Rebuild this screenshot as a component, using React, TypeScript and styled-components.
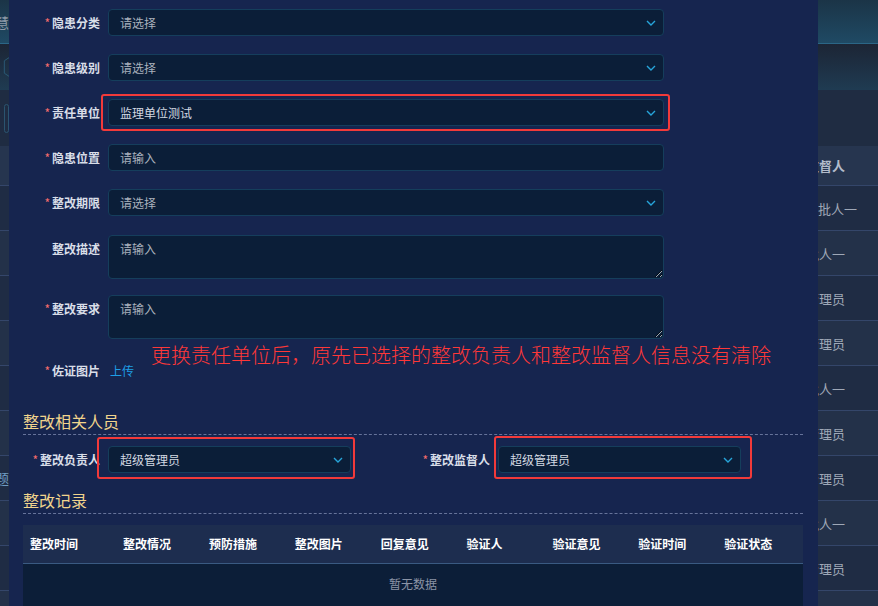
import React from "react"
import styled, { createGlobalStyle } from "styled-components"

const GlobalStyle = createGlobalStyle`
  html, body {
    margin: 0;
    padding: 0;
    background: #16254f;
  }
  body {
    font-family: "Noto Sans CJK SC", "Noto Sans", sans-serif;
  }
  * {
    box-sizing: border-box;
  }
`

const Page = styled.div`
  display: grid;
  grid-template-columns: 9px 809px 1fr;
  height: 606px;
  overflow: hidden;
`

/* ---------- page behind the dialog ---------- */

const Strip = styled.div`
  display: flex;
  flex-direction: column;
  overflow: hidden;
  background: #1f2c44;
`

const TopBar = styled.div`
  height: 44px;
  flex: none;
  display: flex;
  align-items: center;
  background: linear-gradient(#1b3447, #1f4a64);
  border-bottom: 1px solid #2b6686;
  color: #8d9aa8;
  font-size: 16px;
`

const SubBar = styled.div`
  height: 46px;
  flex: none;
  display: flex;
  align-items: center;
  background: linear-gradient(#1c2535, #1f3b52);
`

const FilterBar = styled.div`
  height: 56px;
  flex: none;
  display: flex;
  align-items: center;
  background: #1f2c42;
`

const BgRow = styled.div<{ $head?: boolean; $alt?: boolean; $pr?: number }>`
  height: ${(p) => (p.$head ? 40 : 45)}px;
  flex: none;
  display: flex;
  align-items: center;
  justify-content: flex-end;
  padding-right: ${(p) => p.$pr ?? 33}px;
  white-space: nowrap;
  font-size: 13px;
  font-weight: ${(p) => (p.$head ? 700 : 400)};
  color: ${(p) => (p.$head ? "#b3bccb" : "#9fa8b7")};
  background: ${(p) => (p.$head ? "#26354f" : p.$alt ? "#233149" : "#1f2c44")};
  border-bottom: 1px solid #34466a;
`

const LeftText = styled.span<{ $color?: string }>`
  margin-left: -5px;
  color: ${(p) => p.$color ?? "#8d9aa8"};
  font-size: 14px;
`

const Hexagon = styled.svg`
  margin-left: 2px;
`

const GhostBox = styled.div`
  width: 20px;
  height: 29px;
  margin-left: 4px;
  border: 1px solid #2a5470;
  border-radius: 5px;
`

const LeftRow = styled(BgRow)`
  justify-content: flex-start;
  padding-right: 0;
`

const rightRows = ["二级审批人一", "审批人一", "超级管理员", "超级管理员", "审批人一", "超级管理员", "超级管理员", "审批人一", "超级管理员", "超级管理员"]

const RightBackdrop = () => (
  <Strip>
    <TopBar />
    <SubBar />
    <FilterBar />
    <BgRow $head>整改监督人</BgRow>
    {rightRows.map((t, i) => (
      <BgRow key={i} $alt={i % 2 === 1} $pr={i === 0 ? 21 : 33}>
        {t}
      </BgRow>
    ))}
  </Strip>
)

const LeftBackdrop = () => (
  <Strip>
    <TopBar>
      <LeftText>慧</LeftText>
    </TopBar>
    <SubBar>
      <Hexagon width="9" height="26" viewBox="0 0 9 26">
        <path d="M9 1 L3 5 L3 21 L9 25" fill="none" stroke="#2d6482" strokeWidth="1" />
      </Hexagon>
    </SubBar>
    <FilterBar>
      <GhostBox />
    </FilterBar>
    <LeftRow $head />
    {Array.from({ length: 10 }).map((_, i) => (
      <LeftRow key={i} $alt={i % 2 === 1}>
        {i === 6 && <LeftText $color="#6f9cc2">题</LeftText>}
      </LeftRow>
    ))}
  </Strip>
)

/* ---------- dialog ---------- */

const Modal = styled.div`
  position: relative;
  background: #16254f;
  padding: 9px 15px 0 14px;
  overflow: hidden;
`

const FormItem = styled.div<{ $mb?: number }>`
  display: flex;
  align-items: flex-start;
  margin-bottom: ${(p) => p.$mb ?? 18}px;
`

const Label = styled.label`
  width: 77px;
  flex: none;
  margin-right: 8px;
  text-align: right;
  line-height: 27px;
  font-size: 12px;
  font-weight: 700;
  color: #d9dee8;
  white-space: nowrap;
`

const Star = styled.span`
  color: #f56c6c;
  font-weight: 400;
  margin-right: 2px;
`

const SelectBox = styled.div<{ $w: number; $filled?: boolean }>`
  width: ${(p) => p.$w}px;
  height: 27px;
  display: flex;
  align-items: center;
  justify-content: space-between;
  padding: 0 7px 0 11px;
  background: #0b1e38;
  border: 1px solid #153e5c;
  border-radius: 4px;
  font-size: 12px;
  color: ${(p) => (p.$filled ? "#d3d9e2" : "#a9b1bd")};
`

const TextArea = styled.textarea`
  width: 556px;
  height: 44px;
  padding: 4px 11px;
  background: #0b1e38;
  border: 1px solid #153e5c;
  border-radius: 4px;
  font-family: inherit;
  font-size: 12px;
  line-height: 18px;
  color: #d3d9e2;
  resize: vertical;
  outline: none;
  display: block;

  &::placeholder {
    color: #a9b1bd;
  }
`

const UploadLink = styled.span`
  line-height: 27px;
  font-size: 12px;
  color: #1e9ee6;
  margin-left: 2px;
`

const Marked = styled.div<{ $inset: string }>`
  position: relative;

  &::after {
    content: "";
    position: absolute;
    inset: ${(p) => p.$inset};
    border: 2px solid #f23a3a;
    border-radius: 3px;
    pointer-events: none;
  }
`

const SectionTitle = styled.div<{ $mt: number }>`
  margin-top: ${(p) => p.$mt}px;
  padding-bottom: 2px;
  border-bottom: 1px dashed #66739a;
  font-size: 16px;
  line-height: 22px;
  color: #f1d48c;
`

const PeopleRow = styled.div`
  display: grid;
  grid-template-columns: 390px 390px;
  margin-top: 11px;
`

const Table = styled.div`
  margin-top: 11px;
`

const HeadRow = styled.div`
  display: grid;
  grid-template-columns: 93px repeat(8, 1fr);
  height: 39px;
  background: #1d2d4f;
  border-bottom: 1px solid #3a5a82;
`

const HeadCell = styled.div`
  padding-left: 7px;
  line-height: 38px;
  font-size: 12px;
  font-weight: 700;
  color: #ffffff;
  white-space: nowrap;
`

const EmptyBody = styled.div`
  height: 60px;
  padding-top: 10px;
  background: #0c1e38;
  text-align: center;
  font-size: 12px;
  line-height: 20px;
  color: #8b94a6;
`

const Annotation = styled.div`
  position: absolute;
  left: 142px;
  top: 343px;
  font-size: 20px;
  line-height: 24px;
  font-weight: 300;
  color: #ff3838;
  white-space: nowrap;
`

const Chevron = () => (
  <svg width="10" height="6" viewBox="0 0 10 6">
    <polyline points="1,1 5,5 9,1" fill="none" stroke="#27a5da" strokeWidth="1.4" />
  </svg>
)

const Select = ({ w, value, placeholder }: { w: number; value?: string; placeholder?: string }) => (
  <SelectBox $w={w} $filled={!!value}>
    <span>{value ?? placeholder}</span>
    <Chevron />
  </SelectBox>
)

const Required = ({ children }: { children: React.ReactNode }) => (
  <Label>
    <Star>*</Star>
    {children}
  </Label>
)

const columns = ["整改时间", "整改情况", "预防措施", "整改图片", "回复意见", "验证人", "验证意见", "验证时间", "验证状态"]

export default function App() {
  return (
    <>
      <GlobalStyle />
      <Page>
        <LeftBackdrop />
        <Modal>
          <FormItem>
            <Required>隐患分类</Required>
            <Select w={556} placeholder="请选择" />
          </FormItem>
          <FormItem>
            <Required>隐患级别</Required>
            <Select w={556} placeholder="请选择" />
          </FormItem>
          <FormItem>
            <Required>责任单位</Required>
            <Marked $inset="-5px -6px -5px -7px">
              <Select w={556} value="监理单位测试" />
            </Marked>
          </FormItem>
          <FormItem>
            <Required>隐患位置</Required>
            <SelectBox $w={556}>请输入</SelectBox>
          </FormItem>
          <FormItem $mb={19}>
            <Required>整改期限</Required>
            <Select w={556} placeholder="请选择" />
          </FormItem>
          <FormItem $mb={16}>
            <Label>整改描述</Label>
            <TextArea placeholder="请输入" />
          </FormItem>
          <FormItem>
            <Required>整改要求</Required>
            <TextArea placeholder="请输入" />
          </FormItem>
          <FormItem $mb={0}>
            <Required>佐证图片</Required>
            <UploadLink>上传</UploadLink>
          </FormItem>

          <SectionTitle $mt={26}>整改相关人员</SectionTitle>
          <PeopleRow>
            <FormItem $mb={0}>
              <Required>整改负责人</Required>
              <Marked $inset="-9px -4px -6px -11px">
                <Select w={243} value="超级管理员" />
              </Marked>
            </FormItem>
            <FormItem $mb={0}>
              <Required>整改监督人</Required>
              <Marked $inset="-10px -11px -6px -4px">
                <Select w={243} value="超级管理员" />
              </Marked>
            </FormItem>
          </PeopleRow>

          <SectionTitle $mt={16}>整改记录</SectionTitle>
          <Table>
            <HeadRow>
              {columns.map((c) => (
                <HeadCell key={c}>{c}</HeadCell>
              ))}
            </HeadRow>
            <EmptyBody>暂无数据</EmptyBody>
          </Table>

          <Annotation>更换责任单位后，原先已选择的整改负责人和整改监督人信息没有清除</Annotation>
        </Modal>
        <RightBackdrop />
      </Page>
    </>
  )
}
